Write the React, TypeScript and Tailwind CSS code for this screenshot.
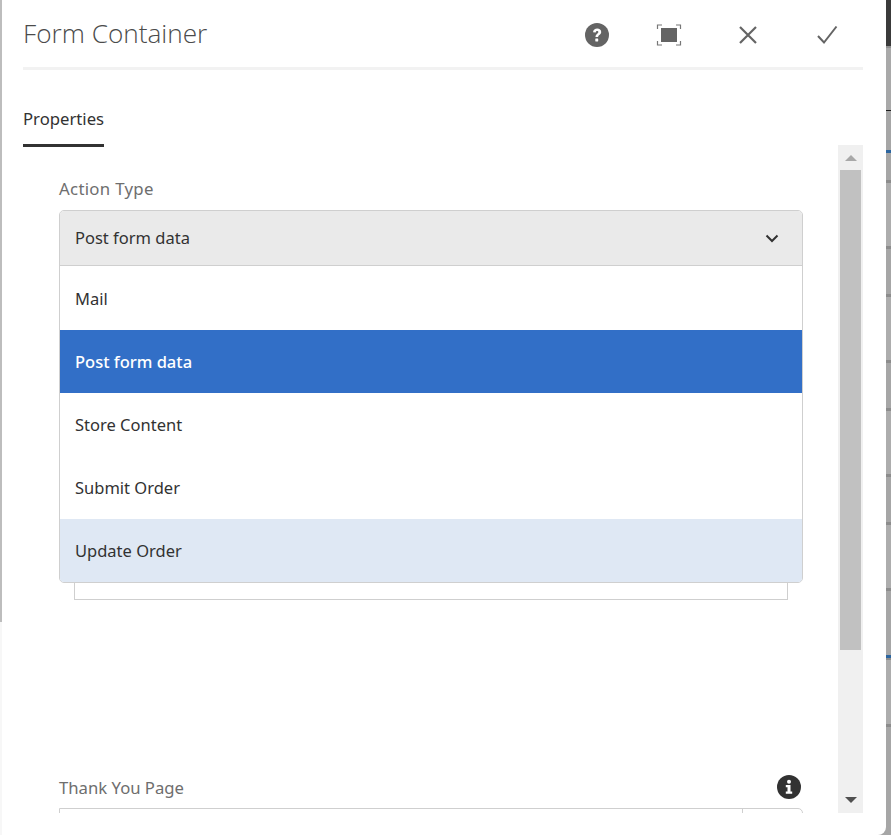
const stripSegments = [
  { h: 46, c: 'bg-[#3a3a3a]' },
  { h: 2, c: 'bg-[#8f8f8f]' },
  { h: 62, c: 'bg-[#a9a9a9]' },
  { h: 1, c: 'bg-[#1c1c1c]' },
  { h: 39, c: 'bg-[#a6a6a6]' },
  { h: 3, c: 'bg-[#2c659f]' },
  { h: 27, c: 'bg-[#a6a6a6]' },
  { h: 3, c: 'bg-[#8c8c8c]' },
  { h: 63, c: 'bg-[#adadad]' },
  { h: 3, c: 'bg-[#8c8c8c]' },
  { h: 45, c: 'bg-[#a6a6a6]' },
  { h: 3, c: 'bg-[#8c8c8c]' },
  { h: 63, c: 'bg-[#adadad]' },
  { h: 3, c: 'bg-[#8c8c8c]' },
  { h: 45, c: 'bg-[#a6a6a6]' },
  { h: 3, c: 'bg-[#8c8c8c]' },
  { h: 63, c: 'bg-[#adadad]' },
  { h: 3, c: 'bg-[#8c8c8c]' },
  { h: 45, c: 'bg-[#a6a6a6]' },
  { h: 3, c: 'bg-[#8c8c8c]' },
  { h: 63, c: 'bg-[#adadad]' },
  { h: 3, c: 'bg-[#8c8c8c]' },
  { h: 64, c: 'bg-[#a6a6a6]' },
  { h: 3, c: 'bg-[#2c659f]' },
  { h: 2, c: 'bg-[#8c8c8c]' },
  { h: 64, c: 'bg-[#adadad]' },
  { h: 3, c: 'bg-[#8c8c8c]' },
  { h: 108, c: 'bg-[#a6a6a6]' },
];

const options = [
  { label: 'Mail', className: 'h-[64px] pt-[3px] text-[#323232]' },
  { label: 'Post form data', className: 'h-[63px] bg-[#326fc7] pt-[2px] font-medium text-white' },
  { label: 'Store Content', className: 'h-[63px] pt-[2px] text-[#323232]' },
  { label: 'Submit Order', className: 'h-[63px] pt-[2px] text-[#323232]' },
  { label: 'Update Order', className: 'h-[63px] bg-[#dfe8f4] pt-[2px] text-[#323232]' },
];

const HelpIcon = () => (
  <svg width="26" height="26" viewBox="0 0 26 26">
    <circle cx="13" cy="13" r="12" fill="#646464" />
    <path d="M9 10.2c.3-2.4 2-3.6 4.2-3.6 2.400 0 4 1.400 4 3.400 0 1.500-.8 2.300-1.900 3.100-.9.700-1.100 1-1.100 2h-2.700c0-1.700.5-2.500 1.700-3.400.8-.6 1.200-1 1.200-1.600 0-.7-.5-1.200-1.300-1.200-.9 0-1.300.6-1.400 1.500z" fill="#fff" />
    <rect x="11.300" y="16.600" width="2.900" height="2.900" rx=".4" fill="#fff" />
  </svg>
);

const FullscreenIcon = () => (
  <svg width="26" height="22" viewBox="0 0 26 22" fill="none">
    <rect x="5" y="4" width="16" height="14" fill="#646464" />
    <path d="M6 1H1.500v4M20 1h4.500v4M6 21H1.500v-4M20 21h4.500v-4" stroke="#777" strokeWidth="1.200" />
  </svg>
);

const CloseIcon = () => (
  <svg width="20" height="20" viewBox="0 0 20 20" fill="none">
    <path d="M2 2l16 16M18 2L2 18" stroke="#646464" strokeWidth="2.200" />
  </svg>
);

const CheckIcon = () => (
  <svg width="22" height="20" viewBox="0 0 22 20" fill="none">
    <path d="M2 11l6 6.500L20.500 1.500" stroke="#646464" strokeWidth="2" />
  </svg>
);

const InfoIcon = () => (
  <svg width="26" height="26" viewBox="0 0 26 26">
    <circle cx="13" cy="13" r="12" fill="#323232" />
    <circle cx="13" cy="7.800" r="2" fill="#fff" />
    <path d="M9.800 11h4.700v6.500h1.700v2.300H9.800v-2.300h1.700v-4.200H9.800z" fill="#fff" />
  </svg>
);

export default function App() {
  return (
    <div className="flex h-[835px] w-[891px] overflow-hidden bg-[#a6a6a6] font-['Noto_Sans',sans-serif]">
      <div className="flex w-[2px] shrink-0 flex-col bg-[#f7f7f7]">
        <div className="h-[622px] bg-[#bdbdbd]" />
      </div>

      <div className="flex min-w-0 flex-1 flex-col rounded-br-[8px] bg-white pl-[21px] pr-[23px]">
        <header className="flex h-[70px] shrink-0 items-center border-b-[3px] border-[#f2f2f2] pb-[3px]">
          <h1 className="pt-[2px] font-['Open_Sans',sans-serif] text-[26.2px] font-light leading-[36px] text-[#4b4b4b]">Form Container</h1>
          <div className="ml-auto flex items-center pt-[6px]">
            <HelpIcon />
            <div className="ml-[46px]"><FullscreenIcon /></div>
            <div className="ml-[56px]"><CloseIcon /></div>
            <div className="ml-[58px] mr-[25px]"><CheckIcon /></div>
          </div>
        </header>

        <div className="flex h-[75px] shrink-0 items-start pt-[37px]">
          <div className="h-[40px] border-b-[3px] border-[#323232] text-[16.7px] leading-[24px] text-[#323232]">Properties</div>
        </div>

        <div className="flex h-[668px] min-h-0">
          <div className="min-w-0 flex-1 overflow-hidden pl-[36px] pr-[35px] pt-[32px]">
            <div className="text-[16.8px] leading-[24px] tracking-[0.3px] text-[#6e6e6e]">Action Type</div>
            <div className="mt-[9px] overflow-hidden rounded-[5px] border border-[#cfcfcf] bg-white">
              <div className="flex h-[55px] items-center justify-between border-b border-[#cfcfcf] bg-[#eaeaea] pl-[15px] pr-[23px] text-[16.5px] text-[#323232]">
                <span>Post form data</span>
                <svg width="14" height="9" viewBox="0 0 14 9" fill="none">
                  <path d="M1.500 1.500L7 7l5.500-5.500" stroke="#323232" strokeWidth="2" />
                </svg>
              </div>
              {options.map((option) => (
                <div key={option.label} className={`flex items-center pl-[15px] text-[16.5px] ${option.className}`}>
                  {option.label}
                </div>
              ))}
            </div>
            <div className="ml-[15px] mr-[15px] h-[17px] border-x border-b border-[#cfcfcf]" />

            <div className="mt-[172px] flex h-[32px] items-center justify-between pr-[1px]">
              <span className="text-[16.7px] leading-[24px] text-[#6e6e6e]">Thank You Page</span>
              <div className="-mt-[2px]"><InfoIcon /></div>
            </div>
            <div className="mt-[4px] flex h-[40px] rounded-tr-[5px] border border-[#cfcfcf]">
              <div className="flex-1" />
              <div className="w-[60px] border-l border-[#cfcfcf]" />
            </div>
          </div>

          <div className="flex w-[25px] shrink-0 flex-col items-center bg-[#f0f0f0]">
            <div className="flex h-[25px] w-full items-center justify-center">
              <div className="h-0 w-0 border-x-[6px] border-b-[6px] border-x-transparent border-b-[#a8a8a8]" />
            </div>
            <div className="h-[480px] w-[21px] bg-[#c1c1c1]" />
            <div className="flex flex-1 items-end justify-center pb-[10px]">
              <div className="h-0 w-0 border-x-[6px] border-t-[6px] border-x-transparent border-t-[#505050]" />
            </div>
          </div>
        </div>
      </div>

      <div className="flex w-[5px] shrink-0 flex-col">
        {stripSegments.map((seg, i) => (
          <div key={i} className={`shrink-0 ${seg.c}`} style={{ height: seg.h }} />
        ))}
      </div>
    </div>
  );
}
